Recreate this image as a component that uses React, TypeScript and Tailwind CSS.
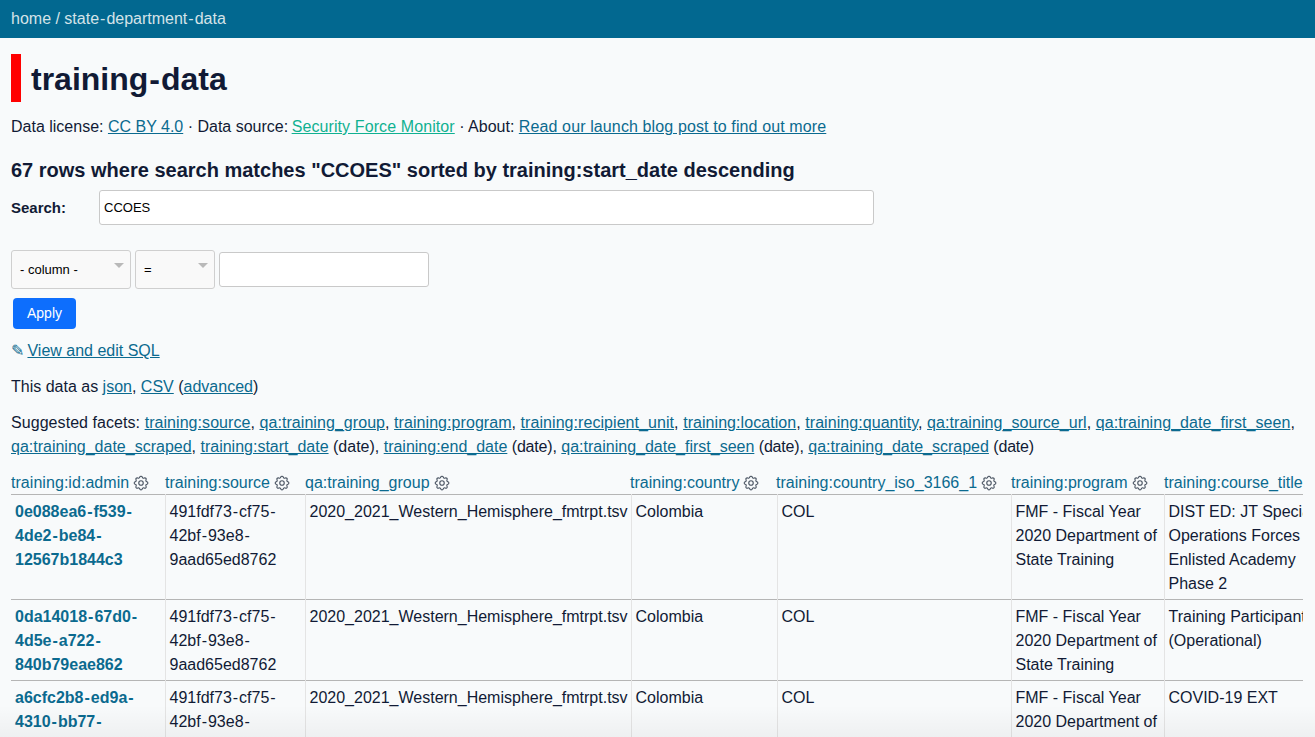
const rows = [
  {
    id: ["0e088ea6-f539-", "4de2-be84-", "12567b1844c3"],
    source: ["491fdf73-cf75-", "42bf-93e8-", "9aad65ed8762"],
    program: ["FMF - Fiscal Year", "2020 Department of", "State Training"],
    title: ["DIST ED: JT Special", "Operations Forces", "Enlisted Academy", "Phase 2"],
  },
  {
    id: ["0da14018-67d0-", "4d5e-a722-", "840b79eae862"],
    source: ["491fdf73-cf75-", "42bf-93e8-", "9aad65ed8762"],
    program: ["FMF - Fiscal Year", "2020 Department of", "State Training"],
    title: ["Training Participant", "(Operational)"],
  },
  {
    id: ["a6cfc2b8-ed9a-", "4310-bb77-"],
    source: ["491fdf73-cf75-", "42bf-93e8-", "9aad65ed8762"],
    program: ["FMF - Fiscal Year", "2020 Department of", "State Training"],
    title: ["COVID-19 EXT"],
  },
]

const columns = [
  { name: "training:id:admin", width: "w-[154px]", label: "tracking-[0.05px]" },
  { name: "training:source", width: "w-[140px]", label: "" },
  { name: "qa:training_group", width: "w-[326px]", label: "" },
  { name: "training:country", width: "w-[146px]", label: "ml-[-1px]" },
  { name: "training:country_iso_3166_1", width: "w-[234px]", label: "ml-[-1px]" },
  { name: "training:program", width: "w-[153px]", label: "" },
  { name: "training:course_title", width: "w-[161px]", label: "" },
]

const facets = [
  "training:source",
  "qa:training_group",
  "training:program",
  "training:recipient_unit",
  "training:location",
  "training:quantity",
  "qa:training_source_url",
  "qa:training_date_first_seen",
]

const linkClass = "text-[#0b6a8f] underline"

function Gear() {
  return (
    <svg
      width="18"
      height="18"
      viewBox="0 0 24 24"
      fill="none"
      stroke="#4b5563"
      strokeWidth="1.5"
      strokeLinecap="round"
      strokeLinejoin="round"
      className="ml-[3px] inline-block align-[-4px]"
    >
      <path d="M10.3 4.3c.4-1.8 3-1.8 3.4 0a1.7 1.7 0 0 0 2.6 1.1c1.5-1 3.4.9 2.4 2.4a1.7 1.7 0 0 0 1.1 2.5c1.8.4 1.8 3 0 3.4a1.7 1.7 0 0 0-1.1 2.6c1 1.5-.9 3.4-2.4 2.4a1.7 1.7 0 0 0-2.6 1.1c-.4 1.8-3 1.8-3.4 0a1.7 1.7 0 0 0-2.5-1.1c-1.5 1-3.4-.9-2.4-2.4a1.7 1.7 0 0 0-1.1-2.6c-1.8-.4-1.8-3 0-3.4a1.7 1.7 0 0 0 1.1-2.5c-1-1.5.9-3.4 2.4-2.4a1.7 1.7 0 0 0 2.5-1.1z" />
      <circle cx="12" cy="12" r="3" />
    </svg>
  )
}

// hyphens between word parts sit wider in the reference's font
function Hyphened({ text }: { text: string }) {
  const parts = text.split("-")
  return (
    <>
      {parts.map((part, i) => (
        <span key={i}>
          {part}
          {i < parts.length - 1 && <span className="mx-[1px]">-</span>}
        </span>
      ))}
    </>
  )
}

function Lines({ items, hyphens }: { items: string[]; hyphens?: boolean }) {
  return (
    <>
      {items.map((line) => (
        <div key={line} className="whitespace-nowrap">
          {hyphens ? <Hyphened text={line} /> : line}
        </div>
      ))}
    </>
  )
}

function Caret() {
  return (
    <span className="absolute top-[12px] right-[6px] h-0 w-0 border-x-[5px] border-t-[5px] border-x-transparent border-t-[#b9b9b9]" />
  )
}

export default function App() {
  return (
    <div className="relative h-screen overflow-hidden bg-[#f8fafb] font-['Liberation_Sans',Arial,sans-serif] text-[16px] leading-[24px] text-[#111a35]">
      <header className="flex h-[38px] items-center bg-[#026890] px-[11px] text-[#d4e3e8]">
        <span>
          home / <Hyphened text="state-department-data" />
        </span>
      </header>

      <main className="px-[11px]">
        <h1 className="mt-[16px] flex h-[48px] items-center border-l-[10px] border-[#ff0000] pt-[2px] pl-[10px] text-[32px] font-bold text-[#111a35]">
          <span>
            <Hyphened text="training-data" />
          </span>
        </h1>

        <p className="mt-[13px] whitespace-nowrap">
          Data license: <a className={linkClass}>CC BY 4.0</a> · Data source:{" "}
          <a className="ml-[-1px] tracking-[0.1px] text-[#10b191] underline">Security Force Monitor</a> · About:{" "}
          <a className={`${linkClass} tracking-[0.12px]`}>Read our launch blog post to find out more</a>
        </p>

        <h3 className="mt-[19px] text-[20px] font-bold">
          67 rows where search matches "CCOES" sorted by training:start_date descending
        </h3>

        <div className="mt-[8px] flex items-center">
          <label className="w-[88px] text-[15px] font-bold">Search:</label>
          <input
            readOnly
            value="CCOES"
            className="h-[35px] w-[775px] rounded-[3px] border border-[#c9c9c9] bg-white px-[4px] text-[13px] text-black"
          />
        </div>

        <div className="mt-[25px] flex items-center gap-[4px]">
          <div className="relative flex h-[39px] w-[120px] items-center rounded-[3px] border border-[#cfcfcf] bg-[#f9f9f9] pt-[1px] pl-[8px] text-[13px] text-black">
            - column -
            <Caret />
          </div>
          <div className="relative flex h-[39px] w-[80px] items-center rounded-[3px] border border-[#cfcfcf] bg-[#f9f9f9] pt-[1px] pl-[8px] text-[13px] text-black">
            =
            <Caret />
          </div>
          <input className="h-[35px] w-[210px] rounded-[3px] border border-[#c9c9c9] bg-white" />
        </div>

        <button className="mt-[9px] ml-[2px] flex h-[31px] w-[63px] items-center justify-center rounded-[4px] bg-[#0d6efd] pb-[2px] text-[14px] text-white">
          Apply
        </button>

        <p className="mt-[10px]">
          <span className="text-[#0b6a8f]">✎</span> <a className={`${linkClass} ml-[-1px]`}>View and edit SQL</a>
        </p>

        <p className="mt-[12px]">
          This data as <a className={linkClass}>json</a>, <a className={linkClass}>CSV</a> (
          <a className={linkClass}>advanced</a>)
        </p>

        <p className="mt-[12px] whitespace-nowrap">
          <span className="tracking-[0.06px]">
            Suggested facets:{" "}
            {facets.map((facet) => (
              <span key={facet}>
                <a className={linkClass}>{facet}</a>,{" "}
              </span>
            ))}
          </span>
          <br />
          <a className={linkClass}>qa:training_date_scraped</a>, <a className={linkClass}>training:start_date</a>{" "}
          (date), <a className={linkClass}>training:end_date</a> <span className="tracking-[-0.2px]">(date)</span>,{" "}
          <a className={linkClass}>qa:training_date_first_seen</a> <span className="tracking-[-0.2px]">(date)</span>,{" "}
          <a className={linkClass}>qa:training_date_scraped</a> <span className="tracking-[-0.2px]">(date)</span>
        </p>

        <div className="mt-[12px] w-[1292px] overflow-hidden">
          <table className="w-[1314px] table-fixed border-collapse">
            <thead>
              <tr className="border-b border-[#b5b5b5]">
                {columns.map((col, i) => (
                  <th
                    key={col.name}
                    className={`${col.width} whitespace-nowrap p-0 pt-[1px] text-left align-top leading-[22px] font-normal text-[#0b6a8f]`}
                  >
                    <span className={col.label}>{col.name}</span>
                    {i < 6 && <Gear />}
                  </th>
                ))}
              </tr>
            </thead>
            <tbody>
              {rows.map((row) => (
                <tr key={row.id[0]} className="border-b border-[#b5b5b5] align-top">
                  <td className="px-[4px] pt-[5px] pb-[3px] font-bold text-[#0b6a8f]">
                    <Lines items={row.id} hyphens />
                  </td>
                  <td className="border-l border-[#e4e4e4] px-[4px] pt-[5px] pb-[3px]">
                    <Lines items={row.source} hyphens />
                  </td>
                  <td className="border-l border-[#e4e4e4] px-[4px] pt-[5px]">
                    2020_2021_Western_Hemisphere_fmtrpt.tsv
                  </td>
                  <td className="border-l border-[#e4e4e4] px-[4px] pt-[5px]">Colombia</td>
                  <td className="border-l border-[#e4e4e4] px-[4px] pt-[5px]">COL</td>
                  <td className="border-l border-[#e4e4e4] px-[4px] pt-[5px]">
                    <Lines items={row.program} />
                  </td>
                  <td className="border-l border-[#e4e4e4] px-[4px] pt-[5px] pb-[3px]">
                    <Lines items={row.title} />
                  </td>
                </tr>
              ))}
            </tbody>
          </table>
        </div>
      </main>

      <div className="pointer-events-none absolute inset-x-0 bottom-0 h-[32px] bg-gradient-to-b from-transparent to-black/[0.04]" />
    </div>
  )
}
